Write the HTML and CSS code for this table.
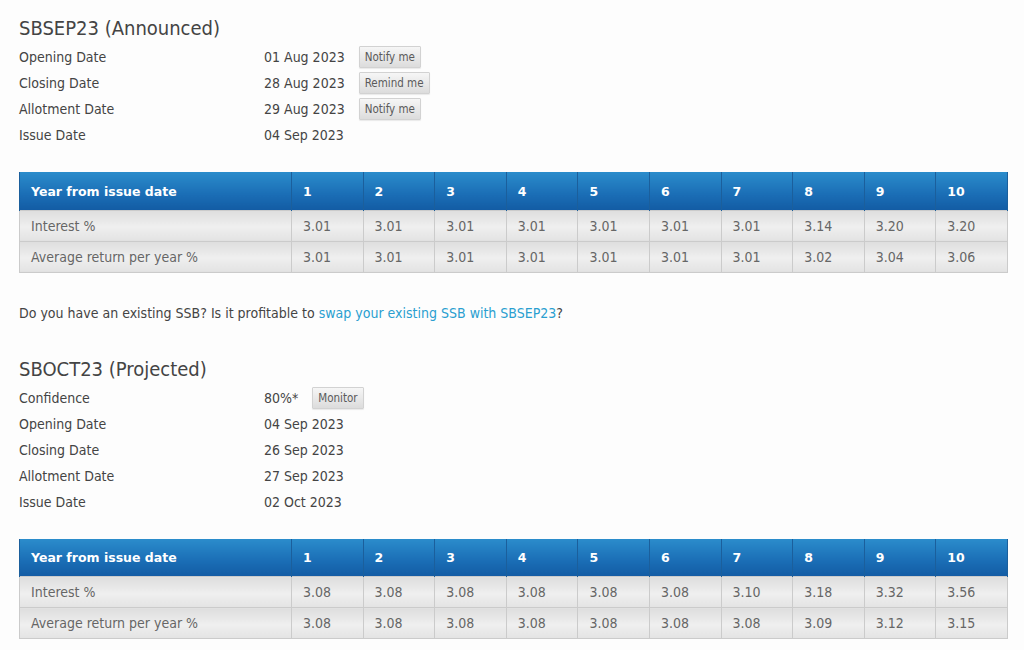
FILE: index.html
```html
<!DOCTYPE html>
<html>
<head>
<meta charset="utf-8">
<link rel="stylesheet" href="styles.css">
</head>
<body>
<div class="page">
  <section class="bond">
    <h2 class="title">SBSEP23 (Announced)</h2>
    <div class="facts">
      <div class="fact"><span class="label">Opening Date</span><span class="value">01 Aug 2023</span><button class="btn">Notify me</button></div>
      <div class="fact"><span class="label">Closing Date</span><span class="value">28 Aug 2023</span><button class="btn">Remind me</button></div>
      <div class="fact"><span class="label">Allotment Date</span><span class="value">29 Aug 2023</span><button class="btn">Notify me</button></div>
      <div class="fact"><span class="label">Issue Date</span><span class="value">04 Sep 2023</span></div>
    </div>
    <table class="rates">
      <colgroup><col class="c-first"><col span="10"></colgroup>
      <thead>
        <tr><th>Year from issue date</th><th>1</th><th>2</th><th>3</th><th>4</th><th>5</th><th>6</th><th>7</th><th>8</th><th>9</th><th>10</th></tr>
      </thead>
      <tbody>
        <tr><td>Interest %</td><td>3.01</td><td>3.01</td><td>3.01</td><td>3.01</td><td>3.01</td><td>3.01</td><td>3.01</td><td>3.14</td><td>3.20</td><td>3.20</td></tr>
        <tr><td>Average return per year %</td><td>3.01</td><td>3.01</td><td>3.01</td><td>3.01</td><td>3.01</td><td>3.01</td><td>3.01</td><td>3.02</td><td>3.04</td><td>3.06</td></tr>
      </tbody>
    </table>
    <p class="note">Do you have an existing SSB? Is it profitable to <a href="#" class="link">swap your existing SSB with SBSEP23</a>?</p>
  </section>

  <section class="bond">
    <h2 class="title">SBOCT23 (Projected)</h2>
    <div class="facts">
      <div class="fact"><span class="label">Confidence</span><span class="value">80%*</span><button class="btn">Monitor</button></div>
      <div class="fact"><span class="label">Opening Date</span><span class="value">04 Sep 2023</span></div>
      <div class="fact"><span class="label">Closing Date</span><span class="value">26 Sep 2023</span></div>
      <div class="fact"><span class="label">Allotment Date</span><span class="value">27 Sep 2023</span></div>
      <div class="fact"><span class="label">Issue Date</span><span class="value">02 Oct 2023</span></div>
    </div>
    <table class="rates">
      <colgroup><col class="c-first"><col span="10"></colgroup>
      <thead>
        <tr><th>Year from issue date</th><th>1</th><th>2</th><th>3</th><th>4</th><th>5</th><th>6</th><th>7</th><th>8</th><th>9</th><th>10</th></tr>
      </thead>
      <tbody>
        <tr><td>Interest %</td><td>3.08</td><td>3.08</td><td>3.08</td><td>3.08</td><td>3.08</td><td>3.08</td><td>3.10</td><td>3.18</td><td>3.32</td><td>3.56</td></tr>
        <tr><td>Average return per year %</td><td>3.08</td><td>3.08</td><td>3.08</td><td>3.08</td><td>3.08</td><td>3.08</td><td>3.08</td><td>3.09</td><td>3.12</td><td>3.15</td></tr>
      </tbody>
    </table>
  </section>
</div>
</body>
</html>
```

FILE: styles.css
```css
* { box-sizing: border-box; }
html, body { margin: 0; padding: 0; background: #fdfdfd; }
body {
  font-family: "DejaVu Sans Condensed", "DejaVu Sans", sans-serif;
  font-size: 14px;
  color: #444;
}
.page { padding: 14px 16px 0 19px; }
.title {
  margin: 0 0 2px 0;
  font-weight: normal;
  font-size: 20px;
  line-height: 28px;
  color: #444;
}
.facts { display: flex; flex-direction: column; }
.fact {
  display: flex;
  align-items: center;
  height: 26px;
}
.label { width: 245px; }
.btn {
  margin-left: 14px;
  height: 22px;
  padding: 0 5px;
  font-family: "DejaVu Sans Condensed", "DejaVu Sans", sans-serif;
  font-size: 11.5px;
  color: #5a5a5a;
  border: 1px solid #d2d2d2;
  border-radius: 1px;
  background: linear-gradient(#f6f6f6, #dcdcdc);
  box-shadow: 0 1px 1px rgba(0,0,0,0.08);
}
.rates {
  margin-top: 24px;
  width: 989px;
  border-collapse: collapse;
  table-layout: fixed;
}
.c-first { width: 272px; }
.rates th {
  height: 38px;
  padding: 1px 11px 0 11px;
  text-align: left;
  font-family: "DejaVu Sans", sans-serif;
  font-size: 12.5px;
  font-weight: bold;
  color: #fff;
  background: linear-gradient(#2b8ccb, #1a6db5 60%, #135ca4);
  border-left: 1px solid #1b5f9c;
  border-right: 1px solid #1b5f9c;
}
.rates td {
  height: 31px;
  padding: 0 11px;
  color: #666;
  background: linear-gradient(#dedede, #efefef 55%, #e3e3e3);
  border: 1px solid #cbcbcb;
}
.note { margin: 32px 0 0 0; line-height: 16px; height: 50px; }
.link { color: #2a9fd0; text-decoration: none; }
```
